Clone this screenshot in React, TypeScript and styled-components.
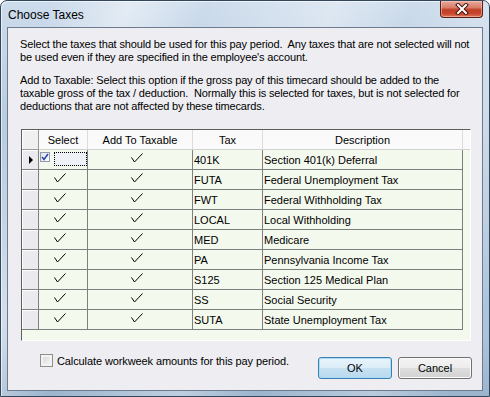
import React from 'react';
import styled, { createGlobalStyle } from 'styled-components';

const GlobalStyle = createGlobalStyle`
  html, body {
    margin: 0;
    padding: 0;
    background: #ffffff;
  }
  body {
    font-family: "Liberation Sans", Arial, sans-serif;
    font-size: 11px;
    color: #000;
  }
  * {
    box-sizing: border-box;
  }
`;

const taxes: Array<[string, string]> = [
  ['401K', 'Section 401(k) Deferral'],
  ['FUTA', 'Federal Unemployment Tax'],
  ['FWT', 'Federal Withholding Tax'],
  ['LOCAL', 'Local Withholding'],
  ['MED', 'Medicare'],
  ['PA', 'Pennsylvania Income Tax'],
  ['S125', 'Section 125 Medical Plan'],
  ['SS', 'Social Security'],
  ['SUTA', 'State Unemployment Tax'],
];

const COLS = '17px 49px 105px 70px 200px';

export default function App() {
  return (
    <>
      <GlobalStyle />
      <Window>
        <TitleBar>
          <Title>Choose Taxes</Title>
          <CloseButton>
            <svg width="14" height="12" viewBox="0 0 14 12">
              <path d="M3 2 L11 10 M11 2 L3 10" stroke="#4a120a" strokeWidth="4" strokeLinecap="square" />
              <path d="M3 2 L11 10 M11 2 L3 10" stroke="#ffffff" strokeWidth="2" strokeLinecap="square" />
            </svg>
          </CloseButton>
        </TitleBar>
        <Client>
          <Paragraph>
            {'Select the taxes that should be used for this pay period.  Any taxes that are not selected will not\nbe used even if they are specified in the employee\'s account.'}
          </Paragraph>
          <Paragraph $gap>
            {'Add to Taxable: Select this option if the gross pay of this timecard should be added to the\ntaxable gross of the tax / deduction.  Normally this is selected for taxes, but is not selected for\ndeductions that are not affected by these timecards.'}
          </Paragraph>

          <Grid>
            <HeaderRow>
              <HeaderCorner />
              <HeaderCell>Select</HeaderCell>
              <HeaderCell>Add To Taxable</HeaderCell>
              <HeaderCell>Tax</HeaderCell>
              <HeaderCell>Description</HeaderCell>
              <HeaderFiller />
            </HeaderRow>
            {taxes.map(([code, desc], i) => (
              <DataRow key={code}>
                <RowHeader>{i === 0 && <Pointer />}</RowHeader>
                {i === 0 ? (
                  <EditCell>
                    <MiniCheck>
                      <svg width="8" height="8" viewBox="0 0 8 8">
                        <path d="M1 4 L3 6.5 L7 1" stroke="#2b49a8" strokeWidth="1.6" fill="none" />
                      </svg>
                    </MiniCheck>
                    <FocusBox />
                  </EditCell>
                ) : (
                  <CheckCell>
                    <Tick />
                  </CheckCell>
                )}
                <CheckCell>
                  <Tick />
                </CheckCell>
                <TextCell>{code}</TextCell>
                <TextCell>{desc}</TextCell>
              </DataRow>
            ))}
          </Grid>

          <Footer>
            <CheckLabel>
              <CheckBox />
              Calculate workweek amounts for this pay period.
            </CheckLabel>
            <Buttons>
              <Button $primary>OK</Button>
              <Button>Cancel</Button>
            </Buttons>
          </Footer>
        </Client>
      </Window>
    </>
  );
}

function Tick() {
  return (
    <TickSvg width="12" height="10" viewBox="0 0 12 10">
      <polyline points="0.5,4.5 3.5,9 11.5,0.5" fill="none" stroke="#000" strokeWidth="1" />
    </TickSvg>
  );
}

const Window = styled.div`
  width: 490px;
  height: 397px;
  display: flex;
  flex-direction: column;
  border: 1px solid #33475c;
  border-radius: 7px 7px 0 0;
  overflow: hidden;
  background:
    linear-gradient(112deg, rgba(255, 255, 255, 0) 8%, rgba(255, 255, 255, 0.45) 20%, rgba(255, 255, 255, 0) 32%,
      rgba(255, 255, 255, 0.35) 52%, rgba(255, 255, 255, 0) 64%, rgba(255, 255, 255, 0.3) 82%, rgba(255, 255, 255, 0) 94%),
    linear-gradient(180deg, #cddcec 0%, #b9cce0 30%, #adc3da 85%, #9cb4cd 100%);
  box-shadow: inset 1px 1px 0 rgba(255, 255, 255, 0.6);
`;

const TitleBar = styled.div`
  height: 26px;
  display: flex;
  align-items: flex-start;
  padding-left: 7px;
  padding-right: 6px;
`;

const Title = styled.div`
  padding-top: 6px;
  font-size: 12px;
  line-height: 16px;
  color: #000;
`;

const CloseButton = styled.div`
  margin-left: auto;
  width: 43px;
  height: 17px;
  display: flex;
  align-items: center;
  justify-content: center;
  border: 1px solid #5b1d14;
  border-top: none;
  border-radius: 0 0 4px 4px;
  background: linear-gradient(180deg, #e9a99c 0%, #d8806c 40%, #c13f27 55%, #c8472e 80%, #de7a5d 100%);
  box-shadow: inset 0 0 0 1px rgba(255, 220, 210, 0.45);
`;

const Client = styled.div`
  flex: 1;
  margin: 0 6px 5px 6px;
  display: flex;
  flex-direction: column;
  padding: 10px 11px 0 12px;
  border: 1px solid #6c7c8e;
  background: #eeeef2;
`;

const Paragraph = styled.p<{ $gap?: boolean }>`
  margin: ${(p) => (p.$gap ? '10px' : '0')} 0 0 0;
  font-size: 11px;
  line-height: 13px;
  letter-spacing: -0.15px;
  white-space: pre;
`;

const Grid = styled.div`
  margin: 16px 0 0 1px;
  height: 212px;
  border: 1px solid;
  border-color: #5e5e5e #ffffff #ffffff #5e5e5e;
  background: #f4f9ee;
`;

const HeaderRow = styled.div`
  display: grid;
  grid-template-columns: ${COLS} 1fr;
  height: 20px;
  background: #fafafa;
`;

const HeaderCorner = styled.div`
  border-right: 1px solid #9a9a9a;
  border-bottom: 1px solid #9a9a9a;
  background: #f0f0f0;
  box-shadow: inset 1px 1px 0 #ffffff;
`;

const HeaderCell = styled.div`
  display: flex;
  align-items: center;
  justify-content: center;
  border-right: 1px solid #dcdcdc;
  border-bottom: 1px solid #d2d2d2;
  font-size: 11px;
`;

const HeaderFiller = styled.div`
  border-bottom: 1px solid #d2d2d2;
`;

const DataRow = styled.div`
  display: grid;
  grid-template-columns: ${COLS};
  height: 20px;
`;

const RowHeader = styled.div`
  display: flex;
  align-items: center;
  justify-content: center;
  border-right: 1px solid #7f7f7f;
  border-bottom: 1px solid #7f7f7f;
  background: #ebebef;
  box-shadow: inset 1px 1px 0 #ffffff;
`;

const Pointer = styled.div`
  width: 0;
  height: 0;
  margin-left: 2px;
  border-left: 4px solid #000;
  border-top: 4px solid transparent;
  border-bottom: 4px solid transparent;
`;

const Cell = styled.div`
  border-right: 1px solid #7f7f7f;
  border-bottom: 1px solid #7f7f7f;
`;

const CheckCell = styled(Cell)`
  display: flex;
  align-items: center;
  justify-content: center;
  padding: 0 7px 3px 0;
`;

const TickSvg = styled.svg`
  display: block;
`;

const TextCell = styled(Cell)`
  display: flex;
  align-items: center;
  padding-left: 1px;
  white-space: nowrap;
  font-size: 11px;
`;

const EditCell = styled(Cell)`
  display: flex;
  align-items: flex-start;
  padding: 2px 0 2px 1px;
`;

const MiniCheck = styled.div`
  width: 10px;
  height: 10px;
  display: flex;
  align-items: center;
  justify-content: center;
  border: 1px solid #8f9aae;
  background: linear-gradient(135deg, #dfe3ea, #ffffff);
`;

const FocusBox = styled.div`
  flex: 1;
  height: 14px;
  margin-left: 4px;
  border: 1px dotted #000;
  background: #eef2f6;
`;

const Footer = styled.div`
  display: flex;
  align-items: flex-start;
  margin-top: 13px;
`;

const CheckLabel = styled.label`
  display: flex;
  align-items: center;
  margin-left: 20px;
  height: 13px;
  font-size: 11px;
  letter-spacing: -0.1px;
  white-space: nowrap;
`;

const CheckBox = styled.span`
  width: 13px;
  height: 13px;
  margin-right: 4px;
  border: 1px solid #8e8f8f;
  background: linear-gradient(135deg, #d4d4d4 0%, #e8e8e8 50%, #f8f8f8 100%);
  box-shadow: inset 0 0 0 2px #f3f3f3;
`;

const Buttons = styled.div`
  display: flex;
  gap: 6px;
  margin: 3px -1px 0 auto;
`;

const Button = styled.div<{ $primary?: boolean }>`
  width: 74px;
  height: 22px;
  display: flex;
  align-items: center;
  justify-content: center;
  border-radius: 3px;
  font-size: 11px;
  border: 1px solid ${(p) => (p.$primary ? '#3c7fb1' : '#707070')};
  background: ${(p) =>
    p.$primary
      ? 'linear-gradient(180deg, #e8f4fb 0%, #dcedf8 50%, #c7e2f3 50%, #b9d9ee 100%)'
      : 'linear-gradient(180deg, #f4f4f4 0%, #ececec 50%, #dedede 50%, #d2d2d2 100%)'};
  box-shadow: inset 0 0 0 1px ${(p) => (p.$primary ? '#a8dcf7' : '#fbfbfb')};
`;
